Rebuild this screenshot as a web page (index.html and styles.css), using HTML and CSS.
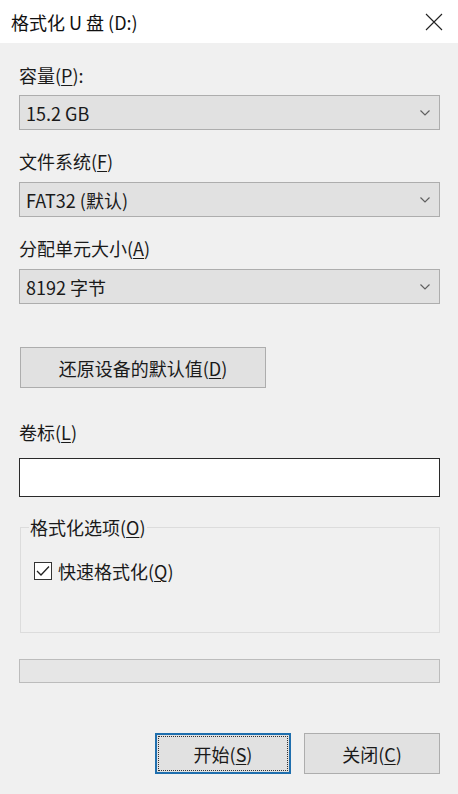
FILE: index.html
```html
<!DOCTYPE html>
<html lang="zh-CN">
<head>
<meta charset="utf-8">
<title>格式化 U 盘 (D:)</title>
<link rel="stylesheet" href="styles.css">
</head>
<body>
<div class="dialog">
  <div class="titlebar">
    <span class="title">格式化 U 盘 (D:)</span>
    <svg class="close" width="20" height="20" viewBox="0 0 20 20"><path d="M2 2 L18 18 M18 2 L2 18" stroke="#222" stroke-width="1.1" fill="none"/></svg>
  </div>
  <div class="content">
    <div class="label">容量(<u>P</u>):</div>
    <div class="combo"><span>15.2 GB</span><svg class="chev" width="10" height="6" viewBox="0 0 10 6"><path d="M0.5 0.5 L5 5 L9.5 0.5" stroke="#606060" stroke-width="1.2" fill="none"/></svg></div>

    <div class="label">文件系统(<u>F</u>)</div>
    <div class="combo"><span>FAT32 (默认)</span><svg class="chev" width="10" height="6" viewBox="0 0 10 6"><path d="M0.5 0.5 L5 5 L9.5 0.5" stroke="#606060" stroke-width="1.2" fill="none"/></svg></div>

    <div class="label">分配单元大小(<u>A</u>)</div>
    <div class="combo"><span>8192 字节</span><svg class="chev" width="10" height="6" viewBox="0 0 10 6"><path d="M0.5 0.5 L5 5 L9.5 0.5" stroke="#606060" stroke-width="1.2" fill="none"/></svg></div>

    <div class="btn restore">还原设备的默认值(<u>D</u>)</div>

    <div class="label vol">卷标(<u>L</u>)</div>
    <div class="textbox"></div>

    <div class="group">
      <div class="legend">格式化选项(<u>O</u>)</div>
      <div class="check-row">
        <span class="checkbox"><svg width="14" height="12" viewBox="0 0 14 12"><path d="M1 6 L5 10 L13 1.5" stroke="#222" stroke-width="1.3" fill="none"/></svg></span>
        <span>快速格式化(<u>Q</u>)</span>
      </div>
    </div>

    <div class="progress"></div>

    <div class="actions">
      <div class="btn primary"><span class="focus">开始(<u>S</u>)</span></div>
      <div class="btn">关闭(<u>C</u>)</div>
    </div>
  </div>
</div>
</body>
</html>
```

FILE: styles.css
```css
html, body {
  margin: 0;
  padding: 0;
}
body {
  width: 458px;
  height: 794px;
  background: #f0f0f0;
  font-family: "Noto Sans CJK SC", "Noto Sans", sans-serif;
  font-size: 18px;
  color: #1a1a1a;
  overflow: hidden;
}
u {
  text-decoration: underline;
  text-underline-offset: 2px;
  text-decoration-thickness: 1px;
}
.dialog {
  display: flex;
  flex-direction: column;
}
.titlebar {
  height: 43px;
  background: #fff;
  display: flex;
  align-items: center;
  justify-content: space-between;
  padding: 0 14px 0 11px;
}
.title {
  font-size: 18px;
  color: #111;
  line-height: 22px;
}
.close {
  display: block;
  margin-top: 1px;
}
.content {
  padding: 21px 18px 0 19px;
  display: flex;
  flex-direction: column;
}
.label {
  line-height: 22px;
  height: 22px;
  margin-bottom: 9px;
}
.combo {
  height: 35px;
  box-sizing: border-box;
  border: 1px solid #adadad;
  background: #e1e1e1;
  display: flex;
  align-items: center;
  justify-content: space-between;
  padding: 0 9px 0 6px;
  margin-bottom: 20px;
  line-height: 22px;
}
.combo + .label {
  margin-bottom: 10px;
}
.chev {
  display: block;
}
.btn {
  box-sizing: border-box;
  border: 1px solid #adadad;
  background: #e1e1e1;
  height: 41px;
  display: flex;
  align-items: center;
  justify-content: center;
  line-height: 22px;
}
.restore {
  width: 246px;
  margin: 23px 0 0 1px;
}
.vol {
  margin-top: 33px;
  margin-bottom: 15px;
}
.textbox {
  height: 39px;
  box-sizing: border-box;
  border: 1px solid #2a2a2a;
  background: #fff;
}
.group {
  margin-top: 30px;
  margin-left: 1px;
  height: 106px;
  box-sizing: border-box;
  border: 1px solid #dcdcdc;
  position: relative;
  padding: 32px 0 0 13px;
}
.legend {
  position: absolute;
  top: -12px;
  left: 8px;
  padding: 0 1px;
  background: #f0f0f0;
  line-height: 22px;
}
.check-row {
  display: flex;
  align-items: center;
  gap: 6px;
  line-height: 22px;
}
.checkbox {
  width: 18px;
  height: 18px;
  box-sizing: border-box;
  border: 1px solid #333;
  background: #fff;
  display: flex;
  align-items: center;
  justify-content: center;
}
.checkbox svg {
  display: block;
}
.progress {
  margin-top: 26px;
  height: 24px;
  box-sizing: border-box;
  border: 1px solid #bcbcbc;
  background: #e6e6e6;
}
.actions {
  margin-top: 50px;
  display: flex;
  justify-content: flex-end;
  gap: 13px;
}
.actions .btn {
  width: 136px;
}
.primary {
  border: 2px solid #1f6fae;
  padding: 1px;
}
.focus {
  flex: 1;
  align-self: stretch;
  display: flex;
  align-items: center;
  justify-content: center;
  border: 1px dotted #333;
}
```
